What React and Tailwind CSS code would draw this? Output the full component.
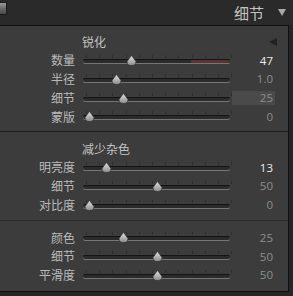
import React from "react";

const cjk = { fontFamily: '"Noto Sans CJK SC", "Noto Sans", sans-serif' };
const num = { fontFamily: '"Open Sans", "Liberation Sans", sans-serif' };

const sections = [
    {
        title: "锐化",
        arrow: true,
        rows: [
            { label: "数量", value: "47", pos: 131, bright: true, red: true },
            { label: "半径", value: "1.0", pos: 116 },
            { label: "细节", value: "25", pos: 123, boxed: true },
            { label: "蒙版", value: "0", pos: 89 },
        ],
    },
    {
        title: "减少杂色",
        rows: [
            { label: "明亮度", value: "13", pos: 106, bright: true },
            { label: "细节", value: "50", pos: 157 },
            { label: "对比度", value: "0", pos: 89 },
        ],
    },
    {
        rows: [
            { label: "颜色", value: "25", pos: 123 },
            { label: "细节", value: "50", pos: 157 },
            { label: "平滑度", value: "50", pos: 157 },
        ],
    },
];

const ticks = [0, 1, 2, 3, 4, 5, 6, 7, 8, 9, 10, 11];

function Thumb() {
    return (
        <svg width="11" height="11" viewBox="0 0 11 11">
            <defs>
                <linearGradient id="tg" x1="0" y1="0" x2="0" y2="1">
                    <stop offset="0" stopColor="#e4e4e4" />
                    <stop offset="1" stopColor="#8a8a8a" />
                </linearGradient>
            </defs>
            <path
                d="M5.5 0.5 L9.8 6.2 Q10.5 10.5 5.5 10.5 Q0.5 10.5 1.2 6.2 Z"
                fill="url(#tg)"
                stroke="#2a2a2a"
                strokeWidth="0.6"
            />
        </svg>
    );
}

function Slider({ pos, red }) {
    return (
        <div className="relative w-[147px] h-full">
            {/* ticks */}
            {ticks.map((t) => (
                <div
                    key={t}
                    className="absolute top-[4px] w-px h-[3px] bg-[#2e2e2e]"
                    style={{ left: 3 + t * 13.2 }}
                />
            ))}
            {/* track */}
            <div className="absolute left-0 right-0 top-[8px] h-[4px] rounded-full bg-[#2b2b2b] border-t border-[#141414] shadow-[0_1px_0_#767676]" />
            {red && (
                <div className="absolute left-[108px] right-[1px] top-[9px] h-[3px] rounded-full bg-[#5c3232]" />
            )}
            <div className="absolute top-[4px]" style={{ left: pos - 83 - 5 }}>
                <Thumb />
            </div>
        </div>
    );
}

function Row({ row }) {
    return (
        <div className="flex h-[18.75px] items-center">
            <div
                className="w-[75px] text-right text-[12px] leading-none text-[#bababa]"
                style={cjk}
            >
                {row.label}
            </div>
            <div className="ml-[8px] h-full">
                <Slider pos={row.pos} red={row.red} />
            </div>
            <div className="ml-[2px] w-[43px] h-full flex items-center">
                <div
                    className={
                        "w-full h-[14px] flex items-center justify-end pr-[2px] text-[11.5px] leading-none " +
                        (row.boxed ? "bg-[#4a4a4a] " : "") +
                        (row.bright ? "text-[#ececec]" : "text-[#8e8e8e]")
                    }
                    style={num}
                >
                    {row.value}
                </div>
            </div>
        </div>
    );
}

export default function App() {
    return (
        <div className="w-[293px] h-[296px] bg-[#262626] overflow-hidden">
            {/* header */}
            <div className="h-[25px] flex items-start bg-[#2a2a2a]">
                <div className="mt-[2px] w-[7px] h-[13px] border border-l-0 border-[#1a1a1a] bg-gradient-to-b from-[#9a9a9a] via-[#6a6a6a] to-[#4a4a4a]" />
                <div className="flex-1" />
                <div
                    className="mt-[5px] text-[15px] leading-none text-[#c4c4c4]"
                    style={cjk}
                >
                    细节
                </div>
                <div className="mt-[9px] ml-[14px] mr-[7px] w-0 h-0 border-l-[4.5px] border-r-[4.5px] border-t-[7px] border-l-transparent border-r-transparent border-t-[#a8a8a8]" />
            </div>

            {/* panel */}
            <div className="w-[289px] bg-[#3c3c3c] border-t border-r border-b border-[#101010]">
                {sections.map((s, i) => (
                    <div
                        key={i}
                        className={
                            (i === 0
                                ? "pt-[7px] pb-[5px] border-b border-[#1c1c1c]"
                                : i === 1
                                ? "pt-[8px] pb-[6px] border-b border-[#2c2c2c]"
                                : "pt-[7px] pb-[6px]")
                        }
                    >
                        {s.title && (
                            <div className="h-[18px] flex items-center">
                                <div
                                    className="ml-[82px] text-[12px] leading-none text-[#c2c2c2]"
                                    style={cjk}
                                >
                                    {s.title}
                                </div>
                                <div className="flex-1" />
                                {s.arrow && (
                                    <div className="mr-[11px] w-0 h-0 border-t-[4px] border-b-[4px] border-r-[8px] border-t-transparent border-b-transparent border-r-[#222222]" />
                                )}
                            </div>
                        )}
                        {s.rows.map((r) => (
                            <Row key={r.label + r.value + r.pos} row={r} />
                        ))}
                    </div>
                ))}
            </div>
        </div>
    );
}
